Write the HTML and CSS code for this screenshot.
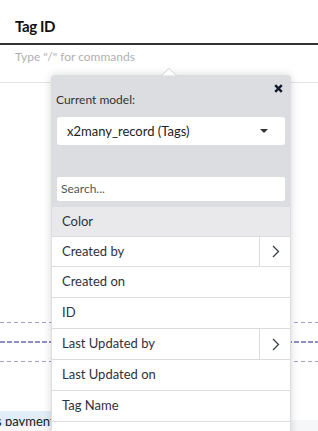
FILE: index.html
```html
<!DOCTYPE html>
<html>
<head>
<meta charset="utf-8">
<link rel="stylesheet" href="styles.css">
</head>
<body>
<div class="page">
  <div class="title">Tag ID</div>
  <div class="editor">Type "/" for commands</div>
  <div class="spacer"></div>
  <div class="dash thin"></div>
  <div class="dash thick"></div>
  <div class="dash thin"></div>
  <div class="spacer2"></div>
  <div class="payrow"><span class="pay">s payment</span></div>
  <div class="greyrow"></div>

  <div class="popover">
    <svg class="arrow" width="16" height="8" viewBox="0 0 16 8"><path d="M0 8 L8 0.5 L16 8 Z" fill="#fff" stroke="#d0d0d4" stroke-width="1"/></svg>
    <div class="pop-head">
      <svg class="close" width="9" height="9" viewBox="0 0 9 9"><path d="M1.2 1.2 L7.8 7.8 M7.8 1.2 L1.2 7.8" stroke="#151a2c" stroke-width="2.4" stroke-linecap="butt"/></svg>
    </div>
    <div class="label">Current model:</div>
    <div class="select">
      <span>x2many_record (Tags)</span>
      <svg class="caret" width="8" height="4" viewBox="0 0 8 4"><path d="M0 0 L8 0 L4 4 Z" fill="#333"/></svg>
    </div>
    <div class="search">Search...</div>
    <ul class="list">
      <li class="item short active"><span class="name">Color</span></li>
      <li class="item short"><span class="name">Created by</span><span class="go"><svg width="8" height="13" viewBox="0 0 8 13"><path d="M1 1 L6.5 6.5 L1 12" fill="none" stroke="#3a3f4b" stroke-width="1.3"/></svg></span></li>
      <li class="item"><span class="name">Created on</span></li>
      <li class="item"><span class="name">ID</span></li>
      <li class="item"><span class="name">Last Updated by</span><span class="go"><svg width="8" height="13" viewBox="0 0 8 13"><path d="M1 1 L6.5 6.5 L1 12" fill="none" stroke="#3a3f4b" stroke-width="1.3"/></svg></span></li>
      <li class="item"><span class="name">Last Updated on</span></li>
      <li class="item"><span class="name">Tag Name</span></li>
      <li class="item"><span class="name"></span></li>
    </ul>
  </div>
</div>
</body>
</html>
```

FILE: styles.css
```css
* { box-sizing: border-box; }
html, body { margin: 0; padding: 0; background: #fff; }
body { font-family: Lato, "Open Sans", sans-serif; color: #222; }
.page { position: relative; width: 318px; height: 431px; overflow: hidden; }

.title {
  height: 45px;
  padding: 17px 0 0 15px;
  font-size: 15px;
  font-weight: 700;
  color: #111;
  border-bottom: 2px solid #333;
  letter-spacing: -0.4px;
}
.editor {
  height: 38px;
  padding: 4px 0 0 15px;
  font-size: 12px;
  color: #b0b0b0;
  border-bottom: 1px solid #e3e3e3;
}
.spacer { height: 239px; }
.dash {
  height: 1px;
  background: repeating-linear-gradient(90deg, #a3a3cf 0 4px, transparent 4px 7px);
  margin-bottom: 18px;
}
.dash.thick {
  height: 2px;
  background: repeating-linear-gradient(90deg, #8f8fc6 0 5px, transparent 5px 7px);
  margin-bottom: 18px;
}
.spacer2 { height: 31px; }
.payrow { height: 16px; display: flex; position: relative; z-index: 1; }
.pay {
  display: block;
  width: 51px;
  height: 15px;
  background: #e1eef8;
  font-size: 13px;
  line-height: 21px;
  color: #222;
  white-space: nowrap;
  overflow: hidden;
  text-indent: -4px;
}
.greyrow { height: 20px; margin-top: -7px; background: #f6f7f8; }

.popover {
  position: absolute;
  left: 51px;
  top: 75px;
  width: 240px;
  height: 380px;
  background: #dcdde1;
  border-radius: 4px;
  box-shadow: 0 0 9px rgba(0,0,0,0.16);
  display: flex;
  flex-direction: column;
  z-index: 2;
}
.arrow { position: absolute; left: 110px; top: -7px; }
.pop-head { height: 17px; display: flex; justify-content: flex-end; padding: 9px 8px 0 0; }
.close { display: block; }
.label { font-size: 12px; color: #333; padding-left: 5px; height: 25px; line-height: 16px; }
.select {
  margin: 0 6px;
  height: 28px;
  background: #fff;
  border-radius: 3px;
  display: flex;
  align-items: center;
  justify-content: space-between;
  padding: 0 17px 0 10px;
  font-size: 13px;
  color: #222;
}
.caret { display: block; }
.search {
  margin: 32px 6px 0;
  height: 24px;
  background: #fff;
  border-radius: 2px;
  padding: 0 4px;
  font-size: 12px;
  line-height: 24px;
  color: #555;
}
.list { list-style: none; margin: 6px 1px 0; padding: 0; background: #fff; }
.item {
  height: 31px;
  border-bottom: 1px solid #dcdcdf;
  display: flex;
  align-items: stretch;
  font-size: 13px;
  color: #2e3240;
}
.item.short { height: 30px; }
.item.active { background: #e9e9eb; }
.name { flex: 1; padding-left: 10px; line-height: 29px; }
.go {
  width: 31px;
  border-left: 1px solid #dcdcdf;
  display: flex;
  align-items: center;
  justify-content: center;
  padding-left: 2px;
}
.go svg { display: block; }
```
